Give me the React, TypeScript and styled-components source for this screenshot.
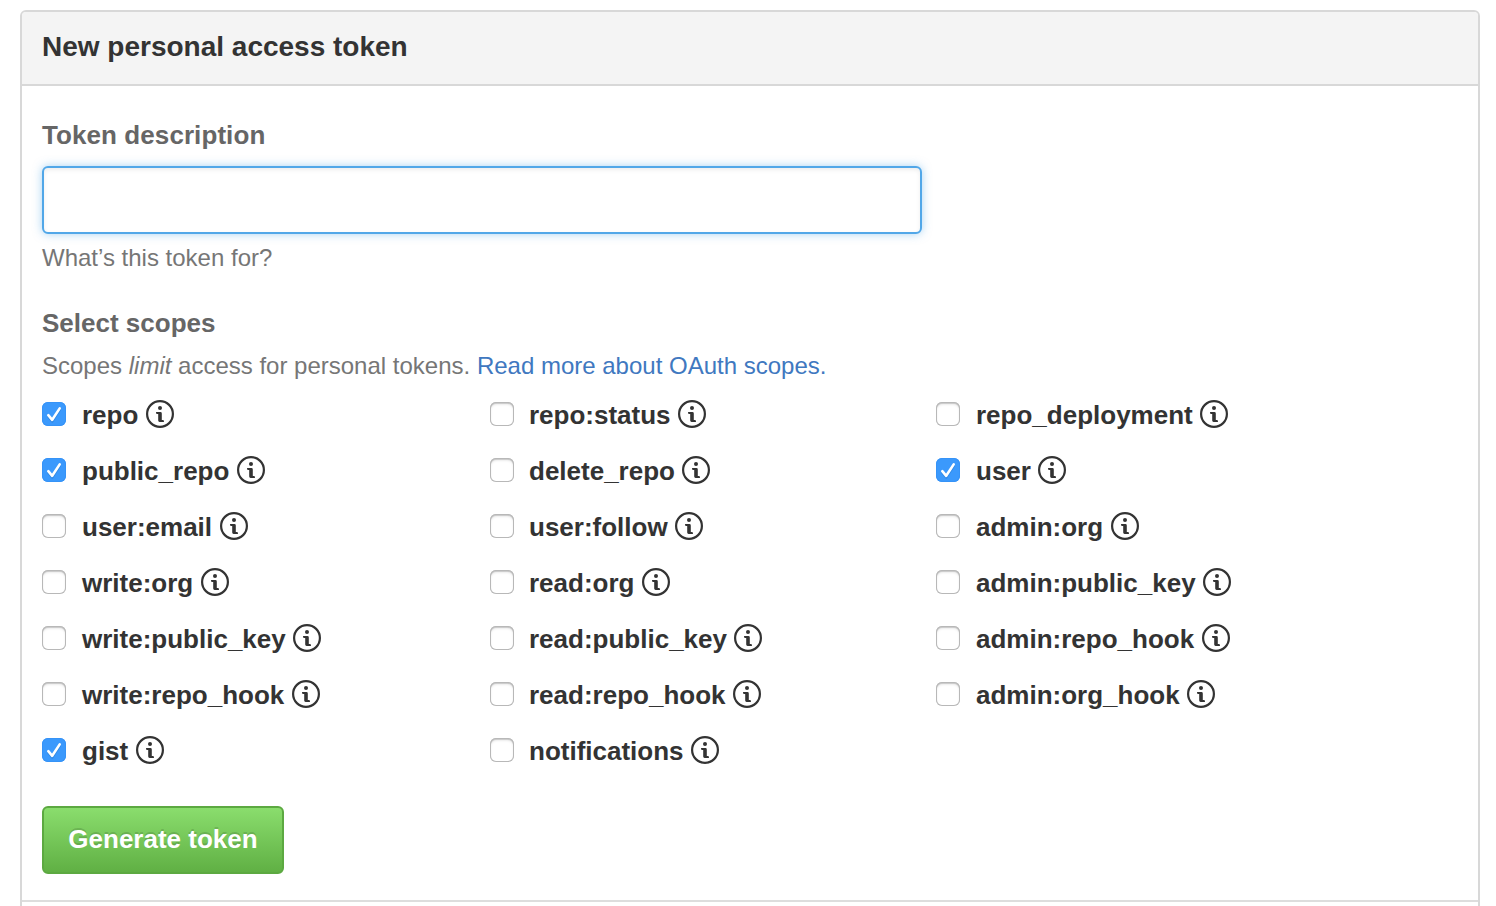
import React, { useState } from 'react';
import styled, { createGlobalStyle } from 'styled-components';

const GlobalStyle = createGlobalStyle`
  * { box-sizing: border-box; }
  body {
    margin: 0;
    background: #fff;
    color: #333;
    font-family: "Liberation Sans", Arial, Helvetica, sans-serif;
    overflow: hidden;
  }
`;

const Page = styled.main`
  height: 906px;
  padding: 10px 16px 0 20px;
  overflow: hidden;
`;

const Panel = styled.section`
  min-height: 940px;
  border: 2px solid #d8d8d8;
  border-radius: 6px;
  overflow: hidden;
`;

const PanelHeader = styled.h1`
  height: 74px;
  margin: 0;
  padding: 18px 20px 0;
  border-bottom: 2px solid #d8d8d8;
  background: #f4f4f4;
  font-size: 28px;
  line-height: 34px;
`;

const TokenForm = styled.form`
  display: flex;
  flex-direction: column;
  align-items: flex-start;
  padding: 34px 20px 26px;
  border-bottom: 2px solid #ddd;
`;

const FieldTitle = styled.label`
  color: #666;
  font-size: 26px;
  font-weight: bold;
  letter-spacing: 0.08px;
  line-height: 30px;
`;

const ScopesTitle = styled.h2`
  margin: 35px 0 0;
  color: #666;
  font-size: 26px;
  line-height: 30px;
`;

const TextInput = styled.input`
  width: 880px;
  height: 68px;
  margin: 16px 0 0;
  padding: 0 16px;
  border: 2px solid #51a7e8;
  border-radius: 6px;
  outline: none;
  background: #fff;
  font: 26px "Liberation Sans", Arial, sans-serif;
  box-shadow: inset 0 2px 4px rgba(0, 0, 0, 0.075), 0 0 10px rgba(81, 167, 232, 0.5);
`;

const Note = styled.p<{ $top: number }>`
  margin: ${({ $top }) => $top}px 0 0;
  color: #767676;
  font-size: 24px;
  line-height: 30px;
`;

const Link = styled.a`
  color: #4078c0;
  text-decoration: none;
`;

const ScopeGrid = styled.div`
  display: grid;
  grid-template-columns: 448px 446px 448px;
  grid-auto-rows: 56px;
  margin-top: 5px;
`;

const ScopeLabel = styled.label`
  display: flex;
  align-items: center;
  font-size: 26px;
  font-weight: bold;
`;

const ScopeName = styled.span<{ $inset: number }>`
  margin-left: ${({ $inset }) => $inset}px;
  padding-top: 2px;
  line-height: 30px;
`;

const HiddenCheckbox = styled.input`
  appearance: none;
  width: 0;
  height: 0;
  margin: 0;
`;

const CheckMark = styled.span<{ $checked: boolean }>`
  display: flex;
  flex: none;
  width: 24px;
  height: 24px;
  border-radius: 6px;
  background: ${({ $checked }) => ($checked ? '#3b99fc' : '#fff')};
  box-shadow: ${({ $checked }) =>
    $checked
      ? 'inset 0 0 0 1px #3693f7'
      : 'inset 0 0 0 1px #b8b8b8, inset 0 1px 0 1px rgba(0, 0, 0, 0.1), inset 0 2px 3px rgba(0, 0, 0, 0.16)'};
`;

const InfoSvg = styled.svg`
  flex: none;
  width: 28px;
  height: 28px;
  margin-left: 7.5px;
`;

const SubmitButton = styled.button`
  width: 242px;
  height: 68px;
  margin: 28px 0 0;
  padding: 0 0 2px;
  border: 2px solid #5ca941;
  border-radius: 6px;
  background: linear-gradient(#8add6d, #60b044);
  color: #fff;
  font: bold 26px "Liberation Sans", Arial, sans-serif;
  text-shadow: 0 -2px 0 rgba(0, 0, 0, 0.15);
`;

const InfoIcon = () => (
  <InfoSvg viewBox="0 0 28 28" aria-hidden="true">
    <circle cx="14" cy="14" r="12.9" fill="none" stroke="#333" strokeWidth="2.2" />
    <circle cx="14" cy="8" r="2" fill="#333" />
    <path d="M10 12H14.4Q15.8 12 15.8 13.4V20H17.2Q18 20.2 18 22H13.6Q12.2 22 12.2 20.6V14H10.8Q10 13.8 10 12Z" fill="#333" />
  </InfoSvg>
);

const Tick = () => (
  <svg width="24" height="24" viewBox="0 0 24 24" aria-hidden="true">
    <path d="M6.3 13.9L10.2 18.6L17.9 6.8" transform="translate(0 1)" fill="none" stroke="#1c6fc4" strokeOpacity="0.4" strokeWidth="2.2" strokeLinecap="round" strokeLinejoin="round" />
    <path d="M6.3 13.2L10.2 17.8L17.7 6.4" fill="none" stroke="#fff" strokeWidth="2.6" strokeLinecap="round" strokeLinejoin="round" />
  </svg>
);

const SCOPES = [
  'repo', 'repo:status', 'repo_deployment',
  'public_repo', 'delete_repo', 'user',
  'user:email', 'user:follow', 'admin:org',
  'write:org', 'read:org', 'admin:public_key',
  'write:public_key', 'read:public_key', 'admin:repo_hook',
  'write:repo_hook', 'read:repo_hook', 'admin:org_hook',
  'gist', 'notifications',
];

export default function App() {
  const [selected, setSelected] = useState(['repo', 'public_repo', 'user', 'gist']);
  const [description, setDescription] = useState('');

  const toggle = (name: string) =>
    setSelected((list) => (list.includes(name) ? list.filter((s) => s !== name) : [...list, name]));

  return (
    <Page>
      <GlobalStyle />
      <Panel>
        <PanelHeader>New personal access token</PanelHeader>
        <TokenForm onSubmit={(e) => e.preventDefault()}>
          <FieldTitle htmlFor="description">Token description</FieldTitle>
          <TextInput id="description" value={description} onChange={(e) => setDescription(e.target.value)} />
          <Note $top={9}>What’s this token for?</Note>
          <ScopesTitle>Select scopes</ScopesTitle>
          <Note $top={13}>
            Scopes <em>limit</em> access for personal tokens.{' '}
            <Link href="#scopes">Read more about OAuth scopes.</Link>
          </Note>
          <ScopeGrid>
            {SCOPES.map((name, i) => {
              const checked = selected.includes(name);
              return (
                <ScopeLabel key={name}>
                  <HiddenCheckbox type="checkbox" checked={checked} onChange={() => toggle(name)} />
                  <CheckMark $checked={checked}>{checked && <Tick />}</CheckMark>
                  <ScopeName $inset={i % 3 === 1 ? 15 : 16}>{name}</ScopeName>
                  <InfoIcon />
                </ScopeLabel>
              );
            })}
          </ScopeGrid>
          <SubmitButton type="submit">Generate token</SubmitButton>
        </TokenForm>
      </Panel>
    </Page>
  );
}
